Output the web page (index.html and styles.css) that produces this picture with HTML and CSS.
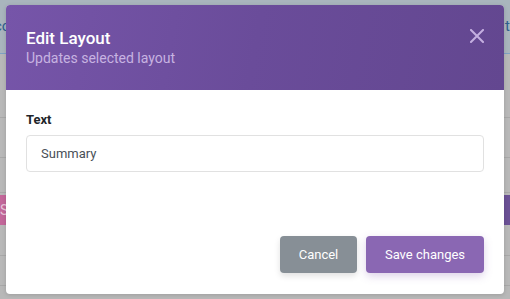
FILE: index.html
```html
<!DOCTYPE html>
<html>
<head>
<meta charset="utf-8">
<link rel="stylesheet" href="styles.css">
</head>
<body>
<div class="page">
  <div class="topbar">
    <span class="tab-left">co</span>
    <span class="tab-right">t</span>
  </div>
  <div class="rows">
    <div class="row r1"></div>
    <div class="row r2"></div>
    <div class="row r3"></div>
    <div class="bar-row">
      <span class="pink">S</span>
      <span class="purple"></span>
    </div>
    <div class="row r4"></div>
    <div class="row r5"></div>
  </div>
</div>
<div class="modal">
  <div class="modal-header">
    <div class="titles">
      <div class="title">Edit Layout</div>
      <div class="subtitle">Updates selected layout</div>
    </div>
    <svg class="close" width="14" height="14" viewBox="0 0 14 14"><path d="M1 1L13 13M13 1L1 13" stroke="#c4afe0" stroke-width="2" stroke-linecap="square"/></svg>
  </div>
  <div class="modal-body">
    <label class="label">Text</label>
    <div class="input">Summary</div>
  </div>
  <div class="modal-footer">
    <button class="btn btn-cancel">Cancel</button>
    <button class="btn btn-save">Save changes</button>
  </div>
</div>
</body>
</html>
```
FILE: styles.css
```css
* { box-sizing: border-box; }
html, body { margin: 0; padding: 0; }
body {
  width: 510px;
  height: 299px;
  overflow: hidden;
  background: #b8b8b8;
  font-family: Roboto, "Liberation Sans", sans-serif;
  position: relative;
}
.page { height: 299px; display: flex; flex-direction: column; }
.topbar {
  height: 54px;
  background: #a9b5bd;
  border-bottom: 1px solid #7fa2c4;
  display: flex;
  justify-content: space-between;
  align-items: flex-start;
  padding-top: 17px;
  font-size: 15px;
  color: #2f5f8f;
}
.tab-left { margin-left: -6px; }
.rows { flex: 1; display: flex; flex-direction: column; }
.row { border-bottom: 1px solid #a8a8a8; }
.r1 { height: 64px; }
.r2 { height: 40px; }
.r3 { height: 35px; }
.bar-row { height: 33px; display: flex; justify-content: space-between; align-items: center; }
.pink { width: 14px; height: 30px; background: #c3679a; color: #e8c4d8; font-size: 14px; line-height: 30px; }
.purple { width: 10px; height: 30px; background: #6b5196; }
.r4 { height: 30px; }
.r5 { height: 30px; }

.modal {
  position: absolute;
  left: 6px;
  top: 5px;
  width: 498px;
  height: 289px;
  background: #fff;
  border-radius: 4px;
  overflow: hidden;
  display: flex;
  flex-direction: column;
  box-shadow: 0 1px 4px rgba(0,0,0,0.15);
}
.modal-header {
  height: 85px;
  background: linear-gradient(100deg, #7655a9 0%, #6a4c9a 50%, #634790 100%);
  display: flex;
  justify-content: space-between;
  align-items: flex-start;
  padding: 22px 20px 0 20px;
}
.title { color: #fff; font-size: 17px; line-height: 22px; font-weight: 500; }
.subtitle { color: #c7b3e1; font-size: 14px; line-height: 18px; margin-top: 0; }
.close { margin-top: 2px; }
.modal-body { padding: 22px 20px 0 20px; flex: 1; }
.label { display: block; font-size: 13px; font-weight: 700; color: #212529; line-height: 16px; margin-bottom: 7px; }
.input {
  height: 37px;
  border: 1px solid #e1e1e1;
  border-radius: 4px;
  padding-left: 14px;
  font-size: 13px;
  line-height: 35px;
  color: #495057;
}
.modal-footer {
  display: flex;
  justify-content: flex-end;
  gap: 9px;
  padding: 0 20px 21px 0;
}
.btn {
  height: 37px;
  border: none;
  border-radius: 4px;
  color: #fff;
  font-family: Roboto, "Liberation Sans", sans-serif;
  font-size: 13px;
  box-shadow: 0 3px 6px rgba(0,0,0,0.12);
}
.btn-cancel { width: 77px; background: #878f96; }
.btn-save { width: 118px; background: #8a67b3; box-shadow: 0 3px 8px rgba(138,103,179,0.3); }
```
